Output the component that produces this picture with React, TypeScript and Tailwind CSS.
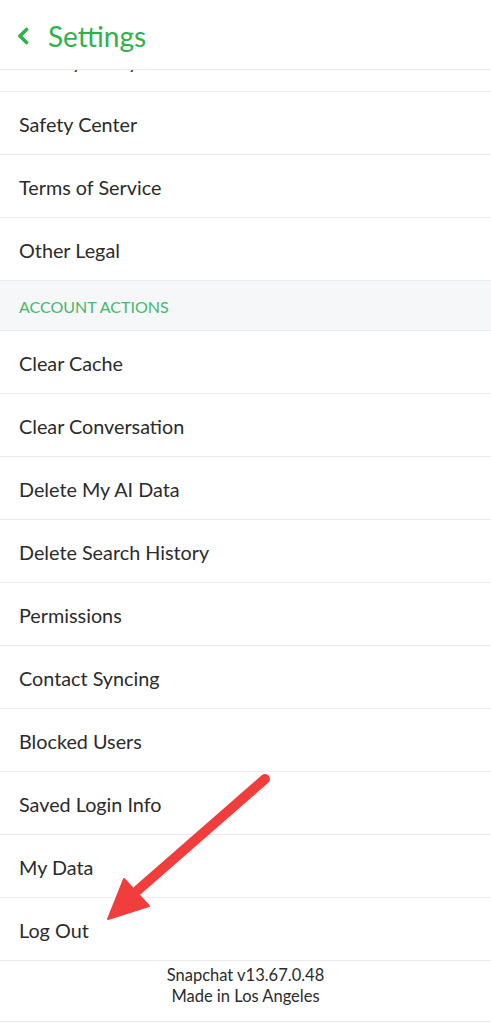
import React from "react";

const topRows = ["Safety Center", "Terms of Service", "Other Legal"];
const actionRows = [
  "Clear Cache",
  "Clear Conversation",
  "Delete My AI Data",
  "Delete Search History",
  "Permissions",
  "Contact Syncing",
  "Blocked Users",
  "Saved Login Info",
  "My Data",
  "Log Out",
];

const Row = ({ text }: { text: string }) => (
  <div className="flex items-center h-[63px] border-b border-[#ebebeb] pl-[19px] pt-[3px] text-[19.8px] text-[#2b2b2b]">
    {text}
  </div>
);

export default function App() {
  return (
    <div
      className="relative w-[491px] h-[1024px] bg-white overflow-hidden"
      style={{ fontFamily: "Lato, 'Noto Sans', sans-serif" }}
    >
      <div className="relative z-10 flex items-center h-[70px] border-b border-[#ebebeb] bg-white pl-[16px] pt-[2px]">
        <svg width="14" height="18" viewBox="0 0 14 18" className="mr-[18px]">
          <path d="M10.5 2.5 L4 9 L10.5 15.5" fill="none" stroke="#2fb24c" strokeWidth="3.6" strokeLinecap="round" strokeLinejoin="round" />
        </svg>
        <span className="text-[28px] text-[#2fb24c] leading-none">Settings</span>
      </div>

      {/* row scrolled under the header, only descenders peek out */}
      <div className="relative h-[22px] overflow-hidden border-b border-[#ebebeb]" aria-hidden="true">
        <div className="absolute left-[19px] top-[-41px] h-[63px] flex items-center pt-[3px] text-[19.8px] text-[#2b2b2b]">
          Privacy Policy
        </div>
      </div>

      {topRows.map((t) => (
        <Row key={t} text={t} />
      ))}

      <div className="flex items-center h-[50px] border-b border-[#ebebeb] bg-[#f5f7f8] pl-[19px] pt-[2px] text-[16px] text-[#45b86d] uppercase">
        Account Actions
      </div>

      {actionRows.map((t) => (
        <Row key={t} text={t} />
      ))}

      <div className="flex flex-col items-center pt-[4px] h-[61px] border-b border-[#ebebeb] text-[16.5px] leading-[21px] text-[#2b2b2b]">
        <span>Snapchat v13.67.0.48</span>
        <span>Made in Los Angeles</span>
      </div>

      <svg className="absolute left-0 top-0 pointer-events-none" width="491" height="1024">
        <line x1="265" y1="779" x2="138" y2="890" stroke="#f23d3d" strokeWidth="10" strokeLinecap="round" />
        <polygon points="124,879 149,906 108,919" fill="#f23d3d" stroke="#f23d3d" strokeWidth="2" strokeLinejoin="round" />
      </svg>
    </div>
  );
}
